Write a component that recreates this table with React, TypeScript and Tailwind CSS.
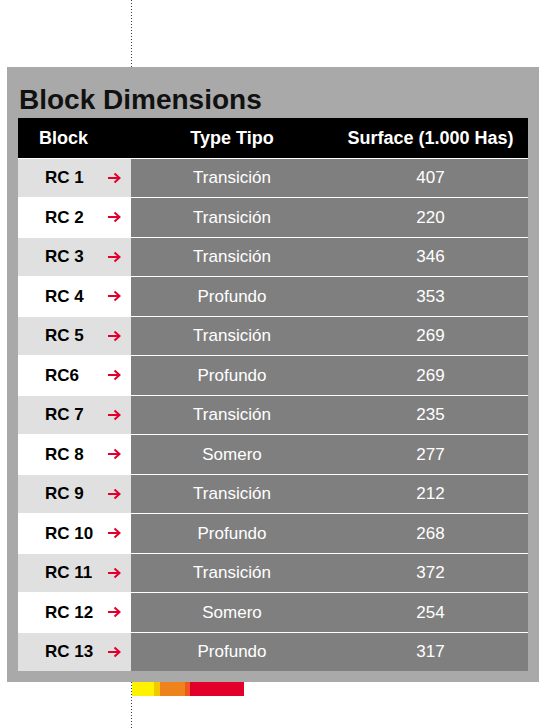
import React from 'react';

const rows = [
  { block: 'RC 1', type: 'Transición', surface: '407' },
  { block: 'RC 2', type: 'Transición', surface: '220' },
  { block: 'RC 3', type: 'Transición', surface: '346' },
  { block: 'RC 4', type: 'Profundo', surface: '353' },
  { block: 'RC 5', type: 'Transición', surface: '269' },
  { block: 'RC6', type: 'Profundo', surface: '269' },
  { block: 'RC 7', type: 'Transición', surface: '235' },
  { block: 'RC 8', type: 'Somero', surface: '277' },
  { block: 'RC 9', type: 'Transición', surface: '212' },
  { block: 'RC 10', type: 'Profundo', surface: '268' },
  { block: 'RC 11', type: 'Transición', surface: '372' },
  { block: 'RC 12', type: 'Somero', surface: '254' },
  { block: 'RC 13', type: 'Profundo', surface: '317' },
];

const DottedLine = ({ height }: { height: number }) => (
  <svg width="1" height={height} className="block">
    <line x1="0.5" y1="0" x2="0.5" y2={height} stroke="#3a3a3a" strokeWidth="1" strokeDasharray="1 2" />
  </svg>
);

const Arrow = () => (
  <svg width="14" height="12" viewBox="0 0 14 12" fill="none" className="block">
    <path d="M1 6h11M7.5 1.5 12.5 6l-5 4.5" stroke="#e1002b" strokeWidth="2" />
  </svg>
);

const App: React.FC = () => {
  return (
    <div className="w-[548px] h-[728px] bg-white overflow-hidden font-['Liberation_Sans',Arial,sans-serif]">
      <div className="ml-[131px] h-[67px]">
        <DottedLine height={67} />
      </div>

      <div className="ml-[7px] w-[532px] bg-[#a9a9a9] pt-[17px] px-[11px] pb-[11px]">
        <h1 className="ml-[1px] mb-[3px] text-[28px] leading-[31px] font-bold text-[#111]">Block Dimensions</h1>
        <div className="w-[510px]">
          <div className="flex h-[39.5px] items-center bg-black pt-[2px] text-[18px] font-bold text-white">
            <div className="w-[113px] pl-[21px]">Block</div>
            <div className="w-[202px] text-center">Type Tipo</div>
            <div className="flex-1 text-center">Surface (1.000 Has)</div>
          </div>
          {rows.map((row, i) => (
            <div key={row.block} className="flex h-[39.5px] border-t border-white text-[17px]">
              <div
                className={`flex w-[113px] items-center pl-[27px] ${i % 2 === 0 ? 'bg-[#e0e0e0]' : 'bg-white'}`}
              >
                <span className="w-[62px] font-bold text-black">{row.block}</span>
                <Arrow />
              </div>
              <div className="flex flex-1 items-center bg-[#7f7f7f] text-white">
                <div className="w-[202px] text-center">{row.type}</div>
                <div className="flex-1 text-center">{row.surface}</div>
              </div>
            </div>
          ))}
        </div>
      </div>

      <div className="flex ml-[131px]">
        <DottedLine height={46} />
        <div className="flex h-[14px]">
          <div className="w-[22px] bg-[#fff200]" />
          <div className="w-[6px] bg-[#f3c800]" />
          <div className="w-[25px] bg-[#ef831b]" />
          <div className="w-[5px] bg-[#ec5a22]" />
          <div className="w-[54px] bg-[#e2002b]" />
        </div>
      </div>
    </div>
  );
};

export default App;
